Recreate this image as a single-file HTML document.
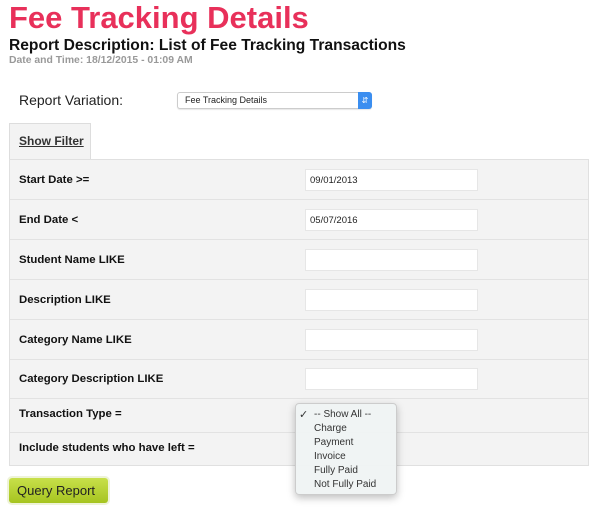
<!DOCTYPE html>
<html><head><meta charset="utf-8"><style>
body{margin:0;width:600px;height:519px;background:#fff;font-family:"Liberation Sans",Arial,sans-serif;position:relative;overflow:hidden}
.a{position:absolute}
h1{position:absolute;left:9px;top:1px;margin:0;font-size:31px;font-weight:bold;color:#e8305a;line-height:34px}
.sub{left:9px;top:37px;font-size:15.6px;font-weight:bold;color:#111}
.dt{left:9px;top:55px;font-size:10.4px;font-weight:bold;color:#999}
.rv{left:19px;top:92px;font-size:14px;color:#222}
.sel{left:177px;top:92px;width:193px;height:15px;border:1px solid #ccc;border-radius:3px;background:#fff;box-shadow:0 1px 1px rgba(0,0,0,.1)}
.sel span{position:absolute;left:7px;top:2px;font-size:9px;color:#222}
.sel i{position:absolute;right:-1px;top:-1px;width:14px;height:17px;background:#3b8ef0;border-radius:0 3px 3px 0;color:#fff;font-size:8px;text-align:center;line-height:17px;font-style:normal}
.tab{left:9px;top:123px;width:80px;height:36px;background:#f3f3f3;border:1px solid #ddd;border-bottom:none}
.tab span{position:absolute;left:9px;top:10px;font-size:12px;font-weight:bold;color:#333;text-decoration:underline}
.tbl{left:9px;top:159px;width:578px;height:305px;background:#f3f3f3;border:1px solid #e0e0e0}
.row{position:absolute;left:0;width:578px;border-bottom:1px solid #e2e2e2}
.row b{position:absolute;left:9px;font-size:11.4px;color:#111}
.inp{position:absolute;left:295px;width:171px;height:20px;background:#fff;border:1px solid #e6e6e6}
.inp span{position:absolute;left:4px;top:5px;font-size:9.5px;color:#222}
.btn{left:9px;top:478px;width:99px;height:25px;background:linear-gradient(#c8e04a,#a6c420);border-radius:3px;box-shadow:0 0 0 2px #eef3d8}
.btn span{position:absolute;left:8px;top:5px;font-size:13px;color:#222}
.dd{left:295px;top:403px;width:100px;height:90px;background:rgba(240,244,244,.97);border:1px solid #ccc;border-radius:4px;box-shadow:0 3px 8px rgba(0,0,0,.25)}
.dd div{position:absolute;left:18px;font-size:10px;color:#333}
</style></head><body>
<h1>Fee Tracking Details</h1>
<div class="a sub">Report Description: List of Fee Tracking Transactions</div>
<div class="a dt">Date and Time: 18/12/2015 - 01:09 AM</div>
<div class="a rv">Report Variation:</div>
<div class="a sel"><span>Fee Tracking Details</span><i>&#8693;</i></div>
<div class="a tab"><span>Show Filter</span></div>
<div class="a tbl">
<div class="row" style="top:0;height:39px"><b style="top:14px">Start Date &gt;=</b><div class="inp" style="top:9px"><span>09/01/2013</span></div></div>
<div class="row" style="top:40px;height:39px"><b style="top:14px">End Date &lt;</b><div class="inp" style="top:9px"><span>05/07/2016</span></div></div>
<div class="row" style="top:80px;height:39px"><b style="top:14px">Student Name LIKE</b><div class="inp" style="top:9px"></div></div>
<div class="row" style="top:120px;height:39px"><b style="top:14px">Description LIKE</b><div class="inp" style="top:9px"></div></div>
<div class="row" style="top:160px;height:39px"><b style="top:14px">Category Name LIKE</b><div class="inp" style="top:9px"></div></div>
<div class="row" style="top:200px;height:38px"><b style="top:13px">Category Description LIKE</b><div class="inp" style="top:8px"></div></div>
<div class="row" style="top:239px;height:33px"><b style="top:9px">Transaction Type =</b></div>
<div class="row" style="top:273px;height:32px;border:none"><b style="top:9px">Include students who have left =</b></div>
</div>
<div class="a dd">
<div style="left:3px;top:4px;font-size:11px">&#10003;</div>
<div style="top:5px">-- Show All --</div>
<div style="top:19px">Charge</div>
<div style="top:33px">Payment</div>
<div style="top:47px">Invoice</div>
<div style="top:61px">Fully Paid</div>
<div style="top:75px">Not Fully Paid</div>
</div>
<div class="a btn"><span>Query Report</span></div>
</body></html>
